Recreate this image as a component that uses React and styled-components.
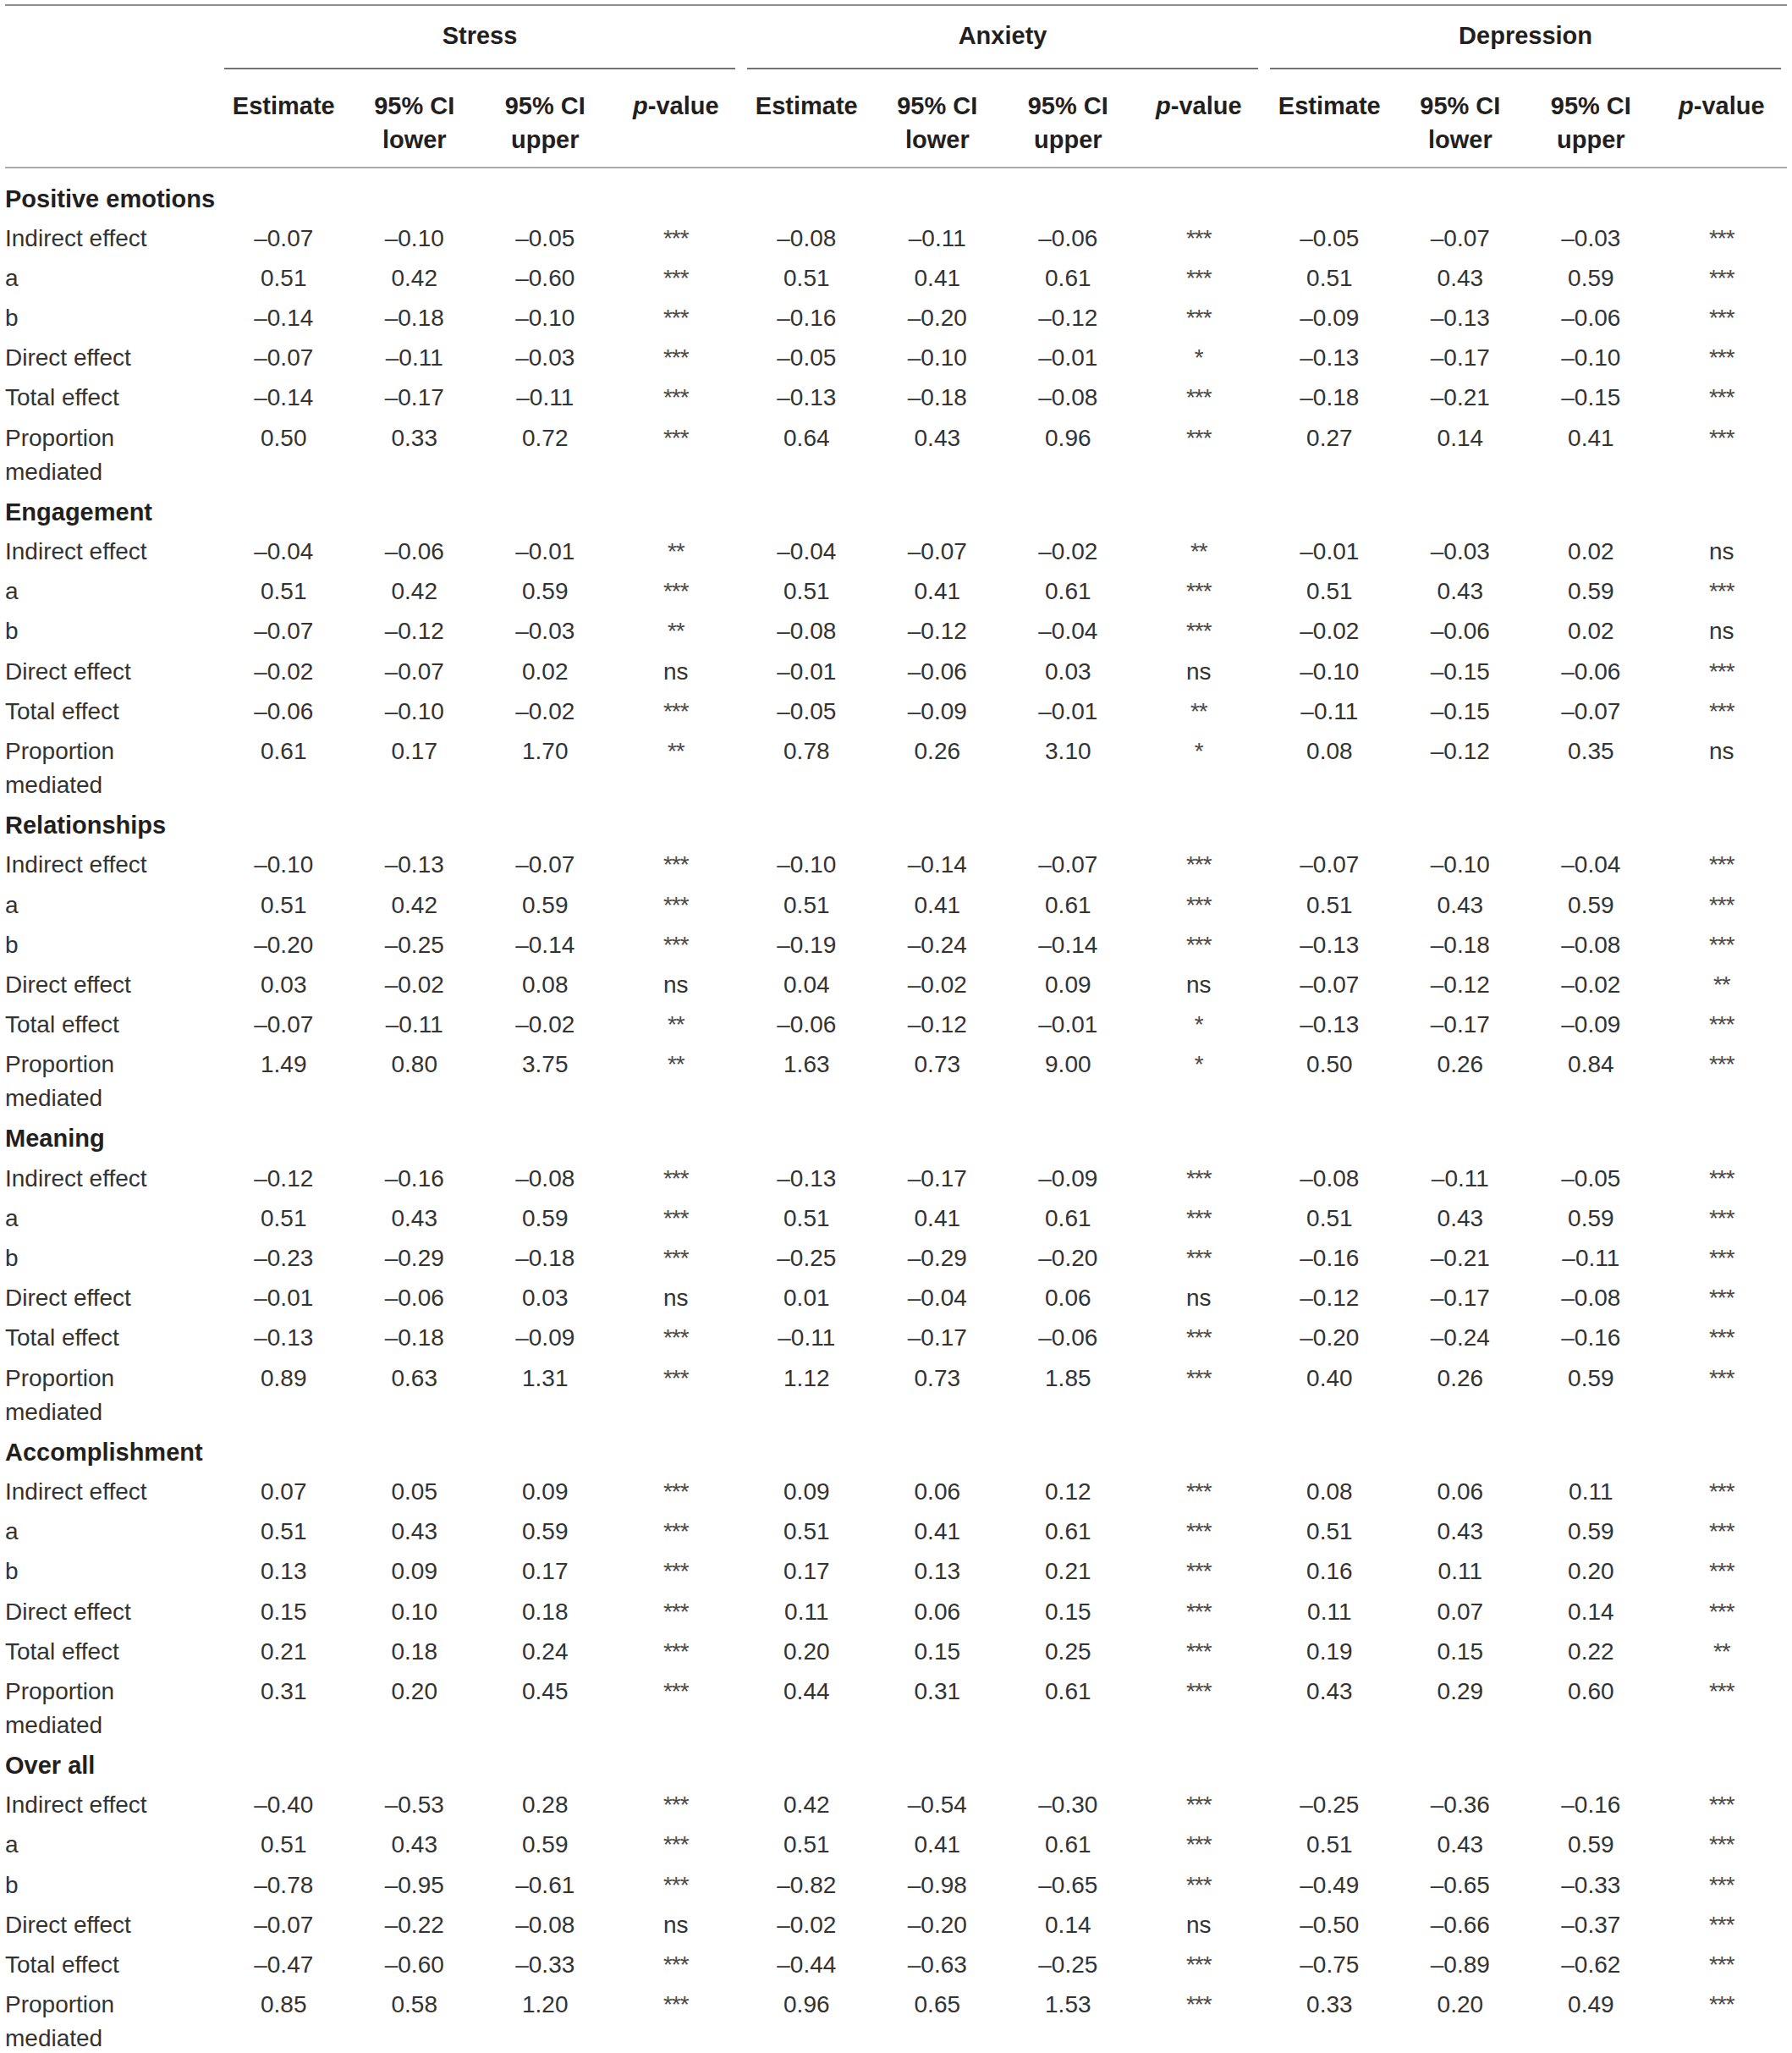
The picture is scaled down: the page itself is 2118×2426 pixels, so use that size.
import React from "react";
import styled, { createGlobalStyle } from "styled-components";

const GlobalStyle = createGlobalStyle`
  html, body { margin: 0; padding: 0; background: #ffffff; }
  body { font-family: "Liberation Sans", Arial, sans-serif; }
`;

const Page = styled.div`
  width: 2118px;
  padding: 5px 6px 0;
  box-sizing: border-box;
`;

const Table = styled.table`
  width: 2106px;
  table-layout: fixed;
  border-collapse: collapse;
  border-spacing: 0;
  border-top: 2px solid #8e8e8e;
  color: #333333;
  font-size: 28px;
`;

const LabelCol = styled.col`
  width: 252px;
`;

const DataCol = styled.col`
  width: 154.5px;
`;

const HeadCell = styled.th`
  padding: 0;
  font-weight: 700;
  font-size: 29px;
  color: #231f20;
  text-align: center;
  vertical-align: top;
`;

const GroupCell = styled(HeadCell)`
  padding: 0 7px;
`;

const GroupLabel = styled.div`
  height: 75px;
  box-sizing: border-box;
  padding-bottom: 2px;
  display: flex;
  align-items: center;
  justify-content: center;
  border-bottom: 2px solid #737373;
`;

const SubHeadRow = styled.tr`
  border-bottom: 2px solid #ababab;
`;

const SubHeadCell = styled(HeadCell)`
  padding: 23px 0 12px;
  line-height: 40px;
`;

const Italic = styled.i`
  font-style: italic;
`;

const Row = styled.tr``;

const SectionCell = styled.td`
  padding: ${(p) => (p.$first ? "15.5px" : "3.6px")} 0 3.6px;
  line-height: 40px;
  font-weight: 700;
  font-size: 29px;
  color: #231f20;
  text-align: left;
  white-space: nowrap;
`;

const LabelCell = styled.td`
  padding: 3.6px 0;
  line-height: 40px;
  text-align: left;
  vertical-align: top;
  color: #333333;
`;

const ValueCell = styled.td`
  padding: 3.6px 0;
  line-height: 40px;
  text-align: center;
  vertical-align: top;
  color: #333333;
`;

const StarCell = styled(ValueCell)`
  color: #4a4a4a;
  letter-spacing: -1px;
`;

const groups = ["Stress", "Anxiety", "Depression"];

const labels = [
  "Indirect effect",
  "a",
  "b",
  "Direct effect",
  "Total effect",
  "Proportion mediated",
];

const sections = [
  {
    name: "Positive emotions",
    rows: [
      "-0.07 -0.10 -0.05 *** -0.08 -0.11 -0.06 *** -0.05 -0.07 -0.03 ***",
      "0.51 0.42 -0.60 *** 0.51 0.41 0.61 *** 0.51 0.43 0.59 ***",
      "-0.14 -0.18 -0.10 *** -0.16 -0.20 -0.12 *** -0.09 -0.13 -0.06 ***",
      "-0.07 -0.11 -0.03 *** -0.05 -0.10 -0.01 * -0.13 -0.17 -0.10 ***",
      "-0.14 -0.17 -0.11 *** -0.13 -0.18 -0.08 *** -0.18 -0.21 -0.15 ***",
      "0.50 0.33 0.72 *** 0.64 0.43 0.96 *** 0.27 0.14 0.41 ***",
    ],
  },
  {
    name: "Engagement",
    rows: [
      "-0.04 -0.06 -0.01 ** -0.04 -0.07 -0.02 ** -0.01 -0.03 0.02 ns",
      "0.51 0.42 0.59 *** 0.51 0.41 0.61 *** 0.51 0.43 0.59 ***",
      "-0.07 -0.12 -0.03 ** -0.08 -0.12 -0.04 *** -0.02 -0.06 0.02 ns",
      "-0.02 -0.07 0.02 ns -0.01 -0.06 0.03 ns -0.10 -0.15 -0.06 ***",
      "-0.06 -0.10 -0.02 *** -0.05 -0.09 -0.01 ** -0.11 -0.15 -0.07 ***",
      "0.61 0.17 1.70 ** 0.78 0.26 3.10 * 0.08 -0.12 0.35 ns",
    ],
  },
  {
    name: "Relationships",
    rows: [
      "-0.10 -0.13 -0.07 *** -0.10 -0.14 -0.07 *** -0.07 -0.10 -0.04 ***",
      "0.51 0.42 0.59 *** 0.51 0.41 0.61 *** 0.51 0.43 0.59 ***",
      "-0.20 -0.25 -0.14 *** -0.19 -0.24 -0.14 *** -0.13 -0.18 -0.08 ***",
      "0.03 -0.02 0.08 ns 0.04 -0.02 0.09 ns -0.07 -0.12 -0.02 **",
      "-0.07 -0.11 -0.02 ** -0.06 -0.12 -0.01 * -0.13 -0.17 -0.09 ***",
      "1.49 0.80 3.75 ** 1.63 0.73 9.00 * 0.50 0.26 0.84 ***",
    ],
  },
  {
    name: "Meaning",
    rows: [
      "-0.12 -0.16 -0.08 *** -0.13 -0.17 -0.09 *** -0.08 -0.11 -0.05 ***",
      "0.51 0.43 0.59 *** 0.51 0.41 0.61 *** 0.51 0.43 0.59 ***",
      "-0.23 -0.29 -0.18 *** -0.25 -0.29 -0.20 *** -0.16 -0.21 -0.11 ***",
      "-0.01 -0.06 0.03 ns 0.01 -0.04 0.06 ns -0.12 -0.17 -0.08 ***",
      "-0.13 -0.18 -0.09 *** -0.11 -0.17 -0.06 *** -0.20 -0.24 -0.16 ***",
      "0.89 0.63 1.31 *** 1.12 0.73 1.85 *** 0.40 0.26 0.59 ***",
    ],
  },
  {
    name: "Accomplishment",
    rows: [
      "0.07 0.05 0.09 *** 0.09 0.06 0.12 *** 0.08 0.06 0.11 ***",
      "0.51 0.43 0.59 *** 0.51 0.41 0.61 *** 0.51 0.43 0.59 ***",
      "0.13 0.09 0.17 *** 0.17 0.13 0.21 *** 0.16 0.11 0.20 ***",
      "0.15 0.10 0.18 *** 0.11 0.06 0.15 *** 0.11 0.07 0.14 ***",
      "0.21 0.18 0.24 *** 0.20 0.15 0.25 *** 0.19 0.15 0.22 **",
      "0.31 0.20 0.45 *** 0.44 0.31 0.61 *** 0.43 0.29 0.60 ***",
    ],
  },
  {
    name: "Over all",
    rows: [
      "-0.40 -0.53 0.28 *** 0.42 -0.54 -0.30 *** -0.25 -0.36 -0.16 ***",
      "0.51 0.43 0.59 *** 0.51 0.41 0.61 *** 0.51 0.43 0.59 ***",
      "-0.78 -0.95 -0.61 *** -0.82 -0.98 -0.65 *** -0.49 -0.65 -0.33 ***",
      "-0.07 -0.22 -0.08 ns -0.02 -0.20 0.14 ns -0.50 -0.66 -0.37 ***",
      "-0.47 -0.60 -0.33 *** -0.44 -0.63 -0.25 *** -0.75 -0.89 -0.62 ***",
      "0.85 0.58 1.20 *** 0.96 0.65 1.53 *** 0.33 0.20 0.49 ***",
    ],
  },
];

const fmt = (v) => v.replace(/^-/, "\u2013");

function Label({ text }) {
  if (text === "Proportion mediated") {
    return (
      <>
        Proportion
        <br />
        mediated
      </>
    );
  }
  return text;
}

export default function App() {
  return (
    <>
      <GlobalStyle />
      <Page>
        <Table>
          <colgroup>
            <LabelCol />
            {Array.from({ length: 12 }).map((_, i) => (
              <DataCol key={i} />
            ))}
          </colgroup>
          <thead>
            <tr>
              <HeadCell />
              {groups.map((g) => (
                <GroupCell key={g} colSpan={4}>
                  <GroupLabel>{g}</GroupLabel>
                </GroupCell>
              ))}
            </tr>
            <SubHeadRow>
              <SubHeadCell />
              {groups.map((g) => (
                <React.Fragment key={g}>
                  <SubHeadCell>Estimate</SubHeadCell>
                  <SubHeadCell>
                    95% CI
                    <br />
                    lower
                  </SubHeadCell>
                  <SubHeadCell>
                    95% CI
                    <br />
                    upper
                  </SubHeadCell>
                  <SubHeadCell>
                    <Italic>p</Italic>-value
                  </SubHeadCell>
                </React.Fragment>
              ))}
            </SubHeadRow>
          </thead>
          <tbody>
            {sections.map((s, si) => (
              <React.Fragment key={s.name}>
                <Row>
                  <SectionCell $first={si === 0} colSpan={13}>
                    {s.name}
                  </SectionCell>
                </Row>
                {s.rows.map((r, ri) => {
                  const vals = r.split(" ");
                  return (
                    <Row key={ri}>
                      <LabelCell>
                        <Label text={labels[ri]} />
                      </LabelCell>
                      {vals.map((v, vi) =>
                        v.startsWith("*") ? (
                          <StarCell key={vi}>{v}</StarCell>
                        ) : (
                          <ValueCell key={vi}>{fmt(v)}</ValueCell>
                        )
                      )}
                    </Row>
                  );
                })}
              </React.Fragment>
            ))}
          </tbody>
        </Table>
      </Page>
    </>
  );
}
